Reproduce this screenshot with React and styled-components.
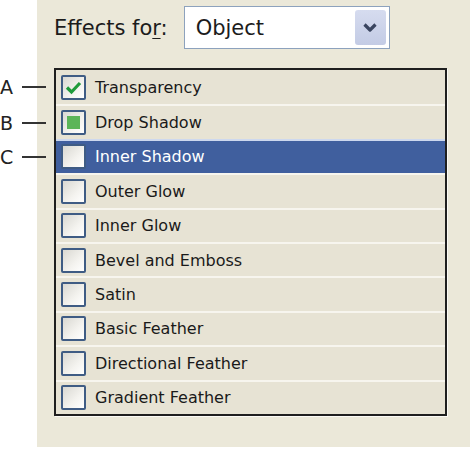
import React from "react";
import styled, { createGlobalStyle } from "styled-components";

const effects = [
  { name: "Transparency", state: "checked", callout: "A" },
  { name: "Drop Shadow", state: "mixed", callout: "B" },
  { name: "Inner Shadow", selected: true, callout: "C" },
  { name: "Outer Glow" },
  { name: "Inner Glow" },
  { name: "Bevel and Emboss" },
  { name: "Satin" },
  { name: "Basic Feather" },
  { name: "Directional Feather" },
  { name: "Gradient Feather" },
];

const App = () => {
  return (
    <>
      <GlobalStyle />
      <Panel>
        <Header>
          <Label>
            Effects fo<u>r</u>:
          </Label>
          <Dropdown>
            <Value>Object</Value>
            <DropButton>
              <svg width="16" height="11" viewBox="0 0 16 11">
                <path
                  d="M2.5 2.5 L8 8 L13.5 2.5"
                  fill="none"
                  stroke="#3a4560"
                  strokeWidth="3.2"
                  strokeLinejoin="round"
                />
              </svg>
            </DropButton>
          </Dropdown>
        </Header>
        <List>
          {effects.map((e, i) => (
            <Row key={e.name} selected={e.selected} first={i === 0}>
              {e.callout && (
                <Callout>
                  <span>{e.callout}</span>
                  <Line />
                </Callout>
              )}
              <Check>
                {e.state === "checked" && (
                  <svg width="17" height="15" viewBox="0 0 17 15">
                    <path
                      d="M2 7.5 L6.5 12 L15 3"
                      fill="none"
                      stroke="#1f9b3b"
                      strokeWidth="3.2"
                    />
                  </svg>
                )}
                {e.state === "mixed" && <Mixed />}
              </Check>
              <Name>{e.name}</Name>
            </Row>
          ))}
        </List>
      </Panel>
    </>
  );
};

export default App;

const GlobalStyle = createGlobalStyle`
  body {
    margin: 0;
    background: #ffffff;
    font-family: "DejaVu Sans", Verdana, sans-serif;
  }
`;

const Panel = styled.div`
  margin-left: 37px;
  width: 433px;
  height: 447px;
  background-color: #ebe8d9;
  padding: 6px 0 0 17px;
  box-sizing: border-box;
`;

const Header = styled.div`
  display: flex;
  align-items: center;
  gap: 16px;
  height: 43px;
`;

const Label = styled.div`
  font-size: 21px;
  color: #1c1c1c;
  u {
    text-decoration-thickness: 1px;
    text-underline-offset: 3px;
  }
`;

const Dropdown = styled.div`
  width: 206px;
  height: 43px;
  box-sizing: border-box;
  border: 1px solid #8da2bd;
  background: #ffffff;
  display: flex;
  align-items: center;
  justify-content: space-between;
  padding: 0 3px 0 11px;
`;

const Value = styled.div`
  font-size: 21px;
  color: #1c1c1c;
`;

const DropButton = styled.div`
  width: 31px;
  height: 35px;
  border-radius: 3px;
  background: linear-gradient(180deg, #d6dcef 0%, #c3cbe5 100%);
  display: flex;
  align-items: center;
  justify-content: center;
`;

const List = styled.div`
  margin-top: 19px;
  width: 393px;
  box-sizing: border-box;
  border: 2px solid #1f1f1f;
  box-shadow: 1px 1px 0 #fbfaf5;
  background: #e7e3d4;
`;

const Row = styled.div`
  position: relative;
  height: 34.4px;
  box-sizing: border-box;
  display: flex;
  align-items: center;
  gap: 9px;
  padding-left: 5px;
  border-top: ${(p) =>
    p.first ? "none" : p.selected ? "2px solid #cdd8ee" : "2px solid #f7f5ee"};
  background: ${(p) => (p.selected ? "#405f9e" : "#e7e3d4")};
  color: ${(p) => (p.selected ? "#ffffff" : "#1a1a1a")};
`;

const Callout = styled.div`
  position: absolute;
  left: -56px;
  top: 50%;
  transform: translateY(-50%);
  display: flex;
  align-items: center;
  gap: 9px;
  font-family: "DejaVu Sans", sans-serif;
  font-size: 19px;
  color: #222222;
  span {
    width: 13px;
  }
`;

const Line = styled.div`
  width: 24px;
  height: 2px;
  background: #333333;
`;

const Check = styled.div`
  width: 25px;
  height: 25px;
  box-sizing: border-box;
  border: 2px solid #3f5c84;
  border-radius: 2px;
  background: linear-gradient(135deg, #d9d8d2 0%, #f4f3ef 60%, #ffffff 100%);
  display: flex;
  align-items: center;
  justify-content: center;
`;

const Mixed = styled.div`
  width: 13px;
  height: 13px;
  background: #5cb558;
`;

const Name = styled.div`
  font-size: 16px;
`;
